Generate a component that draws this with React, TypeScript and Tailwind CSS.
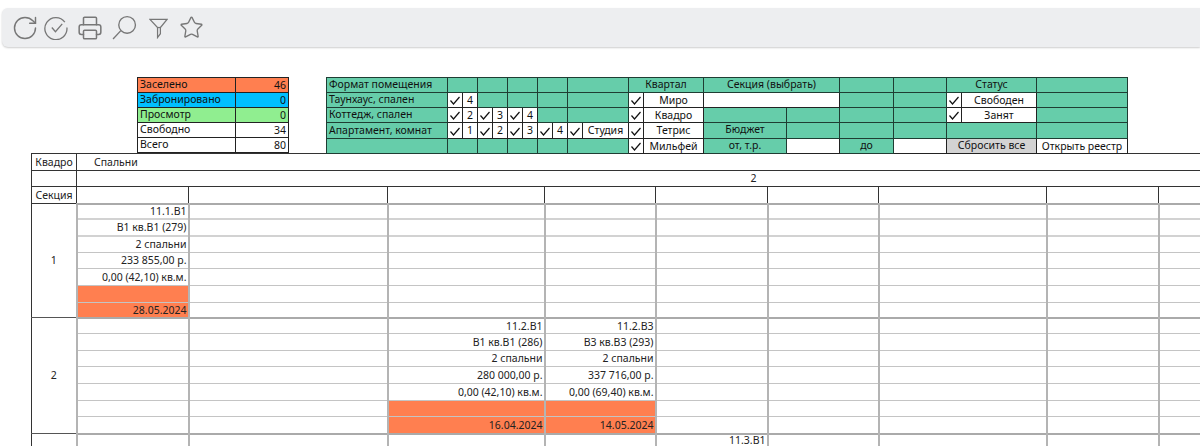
import { Printer, RotateCw, Star } from "lucide-react";
import type { ReactNode } from "react";

const font = "font-['Noto_Sans',sans-serif]";

function Check() {
  return (
    <svg viewBox="0 0 12 12" className="mx-auto block h-[12px] w-[12px]">
      <path d="M1.5 6.5 4.5 10 10.5 3" fill="none" stroke="#111" strokeWidth="1.2" />
    </svg>
  );
}

function Toolbar() {
  return (
    <div className="ml-0.5 mt-2 flex h-[39px] items-center rounded-l-md bg-[#edeef0] pl-[9px] text-[#777] shadow-[0_1px_2px_rgba(0,0,0,0.2)]">
      <div className="flex w-[33px]">
        <RotateCw size={28} strokeWidth={1.25} />
      </div>
      <div className="flex w-[33px]">
        <svg viewBox="0 0 24 24" className="h-[25px] w-[25px]" fill="none" stroke="currentColor" strokeWidth="1.25">
          <path d="M20 6.8A10.6 10.6 0 1 0 22 12" />
          <path d="M7.5 12 11 16 17.5 8.5" />
        </svg>
      </div>
      <div className="flex w-[35px]">
        <Printer size={26} strokeWidth={1.4} />
      </div>
      <div className="flex w-[37px]">
        <svg viewBox="0 0 24 24" className="h-[25px] w-[25px]" fill="none" stroke="currentColor" strokeWidth="1.3">
          <circle cx="14.5" cy="9.5" r="8" />
          <path d="M8.5 15 1 23" />
        </svg>
      </div>
      <div className="flex w-[30px]">
        <svg viewBox="0 0 20 22" className="h-[22px] w-[19px]" fill="none" stroke="currentColor" strokeWidth="1.3">
          <path d="M1 2h18l-7 8.5V17l-3 4V10.5z" />
          <path d="M9 10.5h3" />
        </svg>
      </div>
      <Star size={25} strokeWidth={1.3} />
    </div>
  );
}

const summary = [
  { label: "Заселено", value: 46, bg: "bg-[#ff7f50]" },
  { label: "Забронировано", value: 0, bg: "bg-[#00bfff]" },
  { label: "Просмотр", value: 0, bg: "bg-[#90ee90]" },
  { label: "Свободно", value: 34, bg: "bg-white" },
  { label: "Всего", value: 80, bg: "bg-white" },
];

function SummaryTable() {
  return (
    <table className="w-[151px] table-fixed border-collapse text-[10.5px] leading-none text-[#111]">
      <colgroup>
        <col className="w-[98px]" />
        <col className="w-[53px]" />
      </colgroup>
      <tbody>
        {summary.map((row) => (
          <tr key={row.label} className={`h-[15px] ${row.bg}`}>
            <td className="border border-[#222] px-[2px] pb-px">{row.label}</td>
            <td className="border border-[#222] px-[2px] text-right">{row.value}</td>
          </tr>
        ))}
      </tbody>
    </table>
  );
}

const filterWidths = [121, 15, 15, 15, 15, 15, 15, 15, 15, 15, 46, 15, 60, 83, 53, 54, 53, 15, 75, 91];

function G({ span = 1, children }: { span?: number; children?: ReactNode }) {
  return (
    <td colSpan={span} className="border border-[#1f3d33] bg-[#66cdaa] px-[2px] pb-[2px] text-center">
      {children}
    </td>
  );
}

function Label({ children }: { children?: ReactNode }) {
  return <td className="border border-[#1f3d33] bg-[#66cdaa] px-[2px] pb-px">{children}</td>;
}

function W({ span = 1, children }: { span?: number; children?: ReactNode }) {
  return (
    <td colSpan={span} className="border border-[#222] bg-white p-0 text-center">
      {children}
    </td>
  );
}

function Opt({ children }: { children: ReactNode }) {
  return (
    <>
      <W>
        <Check />
      </W>
      <W>{children}</W>
    </>
  );
}

function FilterTable() {
  return (
    <table className="ml-[37px] w-[801px] table-fixed border-collapse text-[10.5px] leading-none text-[#111]">
      <colgroup>
        {filterWidths.map((w, i) => (
          <col key={i} style={{ width: w }} />
        ))}
      </colgroup>
      <tbody>
        <tr className="h-[15px]">
          <Label>Формат помещения</Label>
          <G span={2} />
          <G span={2} />
          <G span={2} />
          <G span={2} />
          <G span={2} />
          <G span={2}>Квартал</G>
          <G span={2}>Секция (выбрать)</G>
          <G />
          <G />
          <G span={2}>Статус</G>
          <G />
        </tr>
        <tr className="h-[15px]">
          <Label>Таунхаус, спален</Label>
          <Opt>4</Opt>
          <G span={2} />
          <G span={2} />
          <G span={2} />
          <G span={2} />
          <Opt>Миро</Opt>
          <W span={2} />
          <G />
          <G />
          <Opt>Свободен</Opt>
          <G />
        </tr>
        <tr className="h-[15px]">
          <Label>Коттедж, спален</Label>
          <Opt>2</Opt>
          <Opt>3</Opt>
          <Opt>4</Opt>
          <G span={2} />
          <G span={2} />
          <Opt>Квадро</Opt>
          <G />
          <G />
          <G />
          <G />
          <Opt>Занят</Opt>
          <G />
        </tr>
        <tr className="h-[16px]">
          <Label>Апартамент, комнат</Label>
          <Opt>1</Opt>
          <Opt>2</Opt>
          <Opt>3</Opt>
          <Opt>4</Opt>
          <Opt>Студия</Opt>
          <Opt>Тетрис</Opt>
          <G>Бюджет</G>
          <G />
          <G />
          <G />
          <G span={2} />
          <G />
        </tr>
        <tr className="h-[15px]">
          <Label />
          <G span={2} />
          <G span={2} />
          <G span={2} />
          <G span={2} />
          <G span={2} />
          <Opt>Мильфей</Opt>
          <G>от, т.р.</G>
          <W />
          <G>до</G>
          <W />
          <td colSpan={2} className="border border-[#222] bg-[#d3d3d3] p-0 pb-[2px] text-center">
            Сбросить все
          </td>
          <W>Открыть реестр</W>
        </tr>
      </tbody>
    </table>
  );
}

const mainWidths = [45, 112, 199, 157, 111, 112, 111, 168, 112, 272];

type Lot = { col: number; lines: string[]; date: string };

const sections: { id: string; lots: Lot[]; heights: number[] }[] = [
  {
    id: "1",
    heights: [15, 17, 17, 16, 17, 17, 15],
    lots: [
      {
        col: 0,
        lines: ["11.1.В1", "В1 кв.В1 (279)", "2 спальни", "233 855,00 р.", "0,00 (42,10) кв.м."],
        date: "28.05.2024",
      },
    ],
  },
  {
    id: "2",
    heights: [16, 17, 16, 17, 17, 16, 17],
    lots: [
      {
        col: 2,
        lines: ["11.2.В1", "В1 кв.В1 (286)", "2 спальни", "280 000,00 р.", "0,00 (42,10) кв.м."],
        date: "16.04.2024",
      },
      {
        col: 3,
        lines: ["11.2.В3", "В3 кв.В3 (293)", "2 спальни", "337 716,00 р.", "0,00 (69,40) кв.м."],
        date: "14.05.2024",
      },
    ],
  },
  {
    id: "",
    heights: [13, 16],
    lots: [{ col: 4, lines: ["11.3.В1"], date: "" }],
  },
];

function MainTable() {
  const dataCols = mainWidths.slice(1);
  return (
    <table className="-mt-px ml-[31px] w-[1399px] table-fixed border-collapse text-[10.5px] leading-none text-[#222]">
      <colgroup>
        {mainWidths.map((w, i) => (
          <col key={i} style={{ width: w }} />
        ))}
      </colgroup>
      <tbody>
        <tr className="h-[17px]">
          <td className="border border-[#333] text-center">Квадро</td>
          <td colSpan={9} className="border border-[#333] pl-[17px]">
            Спальни
          </td>
        </tr>
        <tr className="h-[16px]">
          <td className="border border-[#333]" />
          <td colSpan={9} className="border border-[#333] text-center">
            2
          </td>
        </tr>
        <tr className="h-[17px]">
          <td className="border border-[#333] text-center">Секция</td>
          {dataCols.map((_, i) => (
            <td key={i} className="border border-[#333]" />
          ))}
        </tr>
        {sections.flatMap((section) =>
          section.heights.map((h, row) => (
            <tr key={`${section.id}-${row}`} style={{ height: h }}>
              {row === 0 && (
                <td
                  rowSpan={section.heights.length}
                  className="border border-x-[#333] border-y-[#555] text-center align-middle"
                >
                  {section.id}
                </td>
              )}
              {dataCols.map((_, col) => {
                const lot = section.lots.find((l) => l.col === col);
                const filled = lot && lot.date !== "" && row >= 5;
                const text = lot ? (row < 5 ? (lot.lines[row] ?? "") : row === 6 ? lot.date : "") : "";
                return (
                  <td
                    key={col}
                    className={`border-x-2 border-y border-x-[#b4b4b4] border-y-[#c4c4c4] px-[1px] text-right ${
                      row === 0 ? "border-t-2 border-t-[#aaa]" : ""
                    } ${section.id === "1" && (row === 1 || row === 2) ? "border-t-2 border-t-[#d2d2d2]" : ""} ${
                      filled ? "bg-[#ff7f50]" : ""
                    }`}
                  >
                    {text}
                  </td>
                );
              })}
            </tr>
          )),
        )}
      </tbody>
    </table>
  );
}

export default function App() {
  return (
    <div className={`h-[446px] w-[1200px] overflow-hidden bg-white ${font}`}>
      <Toolbar />
      <div className="ml-[137px] mt-[30px] flex items-start">
        <SummaryTable />
        <FilterTable />
      </div>
      <MainTable />
    </div>
  );
}
